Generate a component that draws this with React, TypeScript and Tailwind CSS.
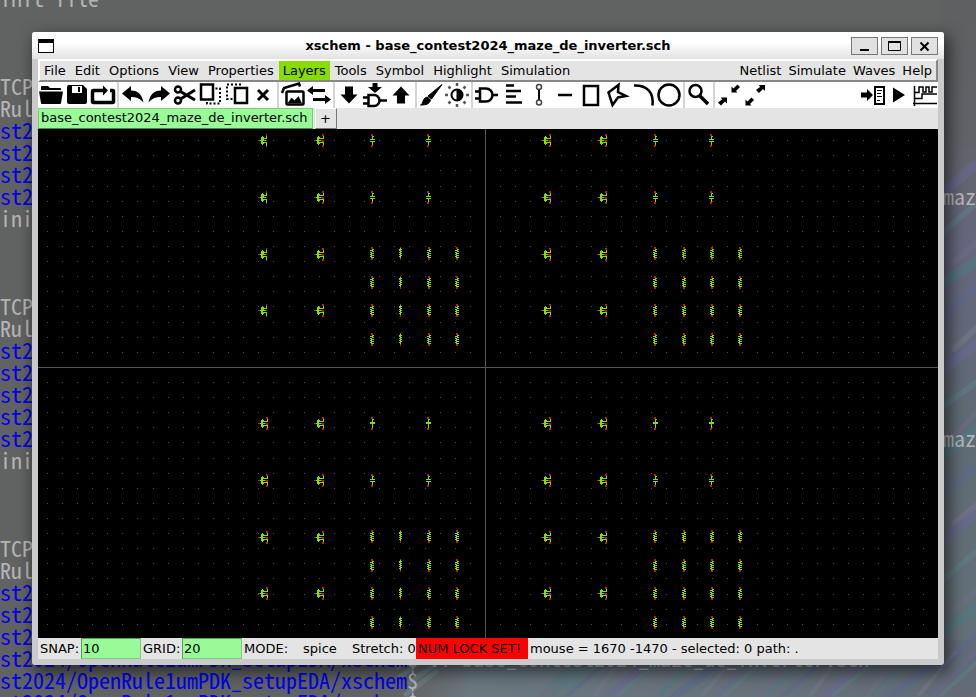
import type { ReactNode } from "react";

const PROMPT = "st2024/OpenRule1umPDK_setupEDA/xschem";

type TermLine = { text: string; blue?: boolean; tail?: string };

const st: TermLine = { text: "st2", blue: true };
const blank: TermLine = { text: "" };
const terminal: TermLine[] = [
  { text: "init file" },
  blank, blank, blank,
  { text: "TCP" },
  { text: "Rul" },
  st, st, st,
  { text: "st2", blue: true, tail: "maz" },
  { text: "ini" },
  blank, blank, blank,
  { text: "TCP" },
  { text: "Rul" },
  st, st, st, st,
  { text: "st2", blue: true, tail: "maz" },
  { text: "ini" },
  blank, blank, blank,
  { text: "TCP" },
  { text: "Rul" },
  st, st, st,
];

function Wallpaper() {
  const right = Array.from({ length: 17 }, (_, i) => i);
  const foot = Array.from({ length: 26 }, (_, i) => i);
  const colors = ["#6a6a92", "#5f7f8a", "#6d6f86", "#4f7c84", "#5b6a8e", "#77788c"];
  return (
    <svg className="absolute inset-0 h-full w-full" aria-hidden="true">
      <defs>
        <linearGradient id="side" x1="0" y1="0" x2="0" y2="1">
          <stop offset="0" stopColor="#5f6061" />
          <stop offset="0.2" stopColor="#626369" />
          <stop offset="0.35" stopColor="#66677f" />
          <stop offset="0.6" stopColor="#5f6b75" />
          <stop offset="1" stopColor="#66727a" />
        </linearGradient>
        <linearGradient id="foot" x1="0" y1="0" x2="1" y2="0">
          <stop offset="0" stopColor="#67696a" stopOpacity="0" />
          <stop offset="0.15" stopColor="#6b7880" />
          <stop offset="1" stopColor="#636c76" />
        </linearGradient>
      </defs>
      <rect width="100%" height="100%" fill="#616262" />
      <rect x="940" width="100%" height="100%" fill="url(#side)" />
      <rect x="380" y="640" width="600" height="60" fill="url(#foot)" />
      {right.map((i) => (
        <path
          key={i}
          d={`M${930 + (i % 3) * 12} ${204 + i * 29}l${44 + (i % 4) * 5} -${38 + (i % 3) * 4}`}
          stroke={colors[i % 6]}
          strokeWidth={i % 3 === 0 ? 10 : 6}
          strokeLinecap="round"
          opacity="0.6"
        />
      ))}
      {foot.map((i) => (
        <path
          key={i}
          d={`M${540 + i * 18 - (i % 3) * 7} ${700 - (i % 2) * 4}l${38 + (i % 3) * 9} -${42 + (i % 4) * 3}`}
          stroke={colors[(i + 2) % 6]}
          strokeWidth={i % 4 === 0 ? 8 : 4}
          opacity="0.6"
        />
      ))}
      <path d="M548 688l40 -34M566 690l28 -26" stroke="#527f7c" strokeWidth="5" opacity="0.6" />
      <path d="M396 668l14 -8M398 678l26 -18M408 684l28 -20M404 696l34 -26" stroke="#6c8a90" strokeWidth="5" opacity="0.6" />
    </svg>
  );
}

function Terminal() {
  return (
    <div className="absolute inset-x-0 -top-3.5 font-['Noto_Sans_Mono_CJK_JP','Liberation_Mono',monospace] text-[22px] leading-[22px] whitespace-pre text-[#b4b4b4]">
      {terminal.map((l, i) => (
        <div key={i} className="flex h-[22px] justify-between">
          <span className={l.blue ? "text-[#0000ee]" : ""}>{l.text}</span>
          {l.tail && <span>{l.tail}</span>}
        </div>
      ))}
      <div className="h-[22px]">
        <span className="text-[#0000ee]">{PROMPT}</span>$ vi base_contest2024_maze_de_inverter.sch
      </div>
      <div className="h-[22px]">
        <span className="text-[#0000ee]">{PROMPT}</span>$
      </div>
      <div className="h-[22px]">
        <span className="text-[#0000ee]">{PROMPT}</span>$
      </div>
    </div>
  );
}

const icons: Record<string, ReactNode> = {
  Open: <><path d="M3 8V5q0-1 1-1h6l2 2h10q1 0 1 1v1z" stroke="none" /><path d="M1 9.5h24l-2 11.5q0 1-1 1H4q-1 0-1-1z" stroke="none" /></>,
  Save: <path d="M5 3h14l4 4v13q0 2-2 2H5q-2 0-2-2V5q0-2 2-2zM8 4v7h10V4zM14 5h2v5h-2z" fillRule="evenodd" stroke="none" />,
  Reload: <><path d="M8 8.5H3.5q-1 0-1 1v10q0 1 1 1h19q1 0 1-1v-10q0-1-1-1H20M7 8.5h7" fill="none" strokeWidth="3.5" /><path d="M13 3.5l5 5-5 5z" stroke="none" /></>,
  Undo: <path d="M2 11.5l9-7.500v4.500c7 0 11 4 12.500 12-4-4.500-8-5.500-12.500-5.500v4z" stroke="none" />,
  Redo: <path d="M24 11.5l-9-7.500v4.500c-7 0-11 4-12.500 12 4-4.500 8-5.500 12.500-5.500v4z" stroke="none" />,
  Cut: <g fill="none" strokeWidth="2.5"><circle cx="6" cy="7.5" r="3" /><circle cx="6" cy="18.5" r="3" /><path d="M8.5 9.5L23 18M8.5 17L23 8" strokeWidth="3" /></g>,
  Copy: <g fill="none" strokeWidth="2.5"><rect x="3" y="2.5" width="12" height="15" /><path d="M17.5 6.5H22v15H9v-3" strokeDasharray="2 2" strokeWidth="2" /></g>,
  Paste: <g fill="none" strokeWidth="2.5"><rect x="11" y="6" width="12" height="15" /><path d="M17 2.5H3V17h6" strokeDasharray="2 2" strokeWidth="2" /></g>,
  Delete: <path d="M8 8l10 10M18 8L8 18" strokeWidth="3" />,
  Images: <><path d="M2 11l2-5 15-4.500 1 3" fill="none" strokeWidth="2.5" /><rect x="6.5" y="9.5" width="17" height="13" rx="1" fill="none" strokeWidth="2.5" /><path d="M8 21l3.500-5 3 2.500 4-4 3 6.500z" strokeWidth="0.5" /></>,
  Swap: <path d="M1 8.5L7 4v3h12v3H7v3zM25 17.5L19 13v3H7v3h12v3z" stroke="none" />,
  Descend: <path d="M9 4.5h8v8h4.500L13 21.500 4.500 12.500H9z" stroke="none" />,
  "Descend symbol": <><path d="M10.5 1h5v4H20l-7 6-7-6h4.500z" stroke="none" /><path d="M1 15.5h6M1 21.5h6M6.500 13H12a5.500 5.500 0 0 1 0 11H6.500zM18 18.500h7" fill="none" strokeWidth="2.5" /></>,
  Ascend: <path d="M9 21.5h8v-8h4.500L13 4.500 4.500 13.500H9z" stroke="none" />,
  Brush: <path d="M24 2.5L13.500 17l-3.500-3zM9.500 15l3 3c-1 4-4 5-10 5 2-1 2-2 3-5q1.500-3 4-3z" strokeWidth="1" />,
  Contrast: <><circle cx="13" cy="13" r="5.5" fill="none" strokeWidth="2" /><path d="M13 7.5a5.500 5.500 0 0 1 0 11z" /><path d="M13 1v3M13 22v3M1 13h3M22 13h3M4.500 4.500l2 2M19.500 19.500l2 2M4.500 21.500l2-2M19.500 6.500l2-2" stroke="#555" strokeWidth="2.5" /></>,
  Gate: <path d="M1 9.5h5M1 16.5h5M6 6.5h6a6.500 6.500 0 0 1 0 13H6zM18.500 13H24" fill="none" strokeWidth="2.5" />,
  Text: <path d="M6 3.500h8M6 9h15M6 14.500h10M6 20.500h16" strokeWidth="2.5" />,
  Wire: <><circle cx="13" cy="5" r="2.5" fill="none" stroke="#444" strokeWidth="1.5" /><path d="M13 8v10" strokeWidth="2" /><circle cx="13" cy="20.500" r="2.5" fill="none" stroke="#444" strokeWidth="1.5" /></>,
  Line: <path d="M6 13h14" strokeWidth="2.5" />,
  Rectangle: <rect x="6" y="4" width="14" height="19" fill="none" strokeWidth="2.5" />,
  Polygon: <path d="M14.5 3l-.5 7 8 4-8 1.500L8.500 23 4.500 10.500z" fill="none" strokeWidth="2.5" />,
  Arc: <path d="M4 3.5c13-.5 20 7 18.500 20" fill="none" strokeWidth="2.5" />,
  Circle: <circle cx="13" cy="13" r="10.5" fill="none" strokeWidth="2.5" />,
  Zoom: <><circle cx="9.5" cy="9" r="6" fill="none" strokeWidth="2.5" /><path d="M14 14l8 8" strokeWidth="3.5" /></>,
  "Zoom in": <><path d="M5 15.5h6v6l-2-2-4 4-3-3 4-3z" stroke="none" /><path d="M21.5 10.5h-6v-6l2 2 4-4 2.500 2.500-4 4z" stroke="none" /></>,
  "Zoom out": <><path d="M17 3h6v6l-2-2-4 4-3-3 4-3z" stroke="none" /><path d="M9.5 23.5h-6v-6l2 2 4-4 2.500 2.500-4 4z" stroke="none" /></>,
  Netlist: <><path d="M1 10.5h6V7l6 6-6 6v-3.500H1z" stroke="none" /><path d="M15 5h9v17h-9z" fill="none" strokeWidth="2" /><path d="M17 8.500h5M17 11.500h4M17 14.500h5M17 18.500h3" strokeWidth="1" /></>,
  Simulate: <path d="M7 5.5l12 7.500-12 7.500z" stroke="none" />,
  Waves: <path d="M2.500 4v20M1 21.500h24M2 10.500h5V5h4v5h3V5h3v5h3V5h5M2 16.500h8V12h15" fill="none" strokeWidth="1.5" />,
};

const groups = [
  ["Open", "Save", "Reload"],
  ["Undo", "Redo", "Cut", "Copy", "Paste", "Delete"],
  ["Images", "Swap"],
  ["Descend", "Descend symbol", "Ascend"],
  ["Brush", "Contrast"],
  ["Gate", "Text", "Wire", "Line", "Rectangle", "Polygon", "Arc", "Circle"],
  ["Zoom"],
  ["Zoom in", "Zoom out"],
];

function Tool({ name }: { name: string }) {
  return (
    <button type="button" aria-label={name} className="h-[26px] w-[26px]">
      <svg viewBox="0 0 26 26" className="block h-[26px] w-[26px]" fill="#000" stroke="#000">
        {icons[name]}
      </svg>
    </button>
  );
}

// Symbols as pixel maps: g = body, r = pin.
const MOS_A = ["........r", "........r", "....g...g", "...ggg..g", "...gggggg", "...ggg...", "rrggggggr", "...gg....", "...gggggg", "...ggg..g", "....g...g", "........g", "........r"];
const MOS_B = ["........rr", "........rr", "....g....g", "...ggg...g", "...ggggggg", "...gg.....", "rrgggggrrr", "...gg...rr", "...ggggggg", "...ggg...g", "....g....g", "........rr", "........rr"];
const CAP = [".rr..", ".rr..", "..gg.", "..g..", "..g..", "ggggg", ".....", "ggggg", "..g..", "..g..", "..g..", ".rr..", ".rr.."];
const CAP_B = [".rr..", ".rr..", "..gg.", "..g..", "..g..", "ggggg", "ggggg", "..g..", "..g..", "..g..", "..g..", ".rr..", ".rr.."];
const RES = [".rr.", ".rr.", "..gg", "ggg.", "..gg", "gg..", ".ggg", "gg..", ".ggg", "gg..", ".ggg", ".rr.", ".rr."];
const RES_N = [".r.", ".g.", "ggg", "gg.", ".gg", "gg.", ".gg", "gg.", ".gg", "gg.", ".g.", ".r.", ".r."];

function Sprite({ map, x, y }: { map: string[]; x: number; y: number }) {
  let g = "";
  let r = "";
  map.forEach((row, j) => {
    [...row].forEach((c, i) => {
      if (c === "g") g += `M${x + i} ${y + j}h1v1h-1z`;
      if (c === "r") r += `M${x + i} ${y + j}h1v1h-1z`;
    });
  });
  return (
    <>
      <path d={g} fill="#88dd00" />
      <path d={r} fill="#bb2200" />
    </>
  );
}

const STEP = 15.11;
const OX = 447.52;
const OY = 238.35;

function Schematic() {
  let dots = "";
  for (let i = -29; i <= 29; i++)
    for (let j = -15; j <= 17; j++) dots += `M${Math.floor(OX + i * STEP)} ${Math.floor(OY + j * STEP)}h1v1h-1z`;
  return (
    <svg className="block h-full w-full" shapeRendering="crispEdges" role="img" aria-label="Schematic">
      <path d={dots} fill="#4d4d4d" />
      <path d="M0 238h2000v1H0zM447 0h1v2000h-1z" fill="#555" />
      {[0, 283].map((dx) =>
        [0, 283].map((dy) => (
          <g key={`${dx}-${dy}`}>
            {[5, 62, 119, 175].map((y) => (
              <g key={y}>
                <Sprite map={dx || dy ? MOS_B : MOS_A} x={220 + dx} y={y + dy} />
                <Sprite map={MOS_B} x={276 + dx} y={y + dy} />
              </g>
            ))}
            {[5, 62].map((y) => (
              <g key={y}>
                <Sprite map={dy && y === 5 ? CAP_B : CAP} x={332 + dx} y={y + dy} />
                <Sprite map={dy && y === 5 ? CAP_B : CAP} x={388 + dx} y={y + dy} />
              </g>
            ))}
            {[118, 147, 175, 204].map((y) =>
              [332, 361, 389, 417].map((x, k) => (
                <Sprite key={`${x}-${y}`} map={k === 1 && !dx ? RES_N : RES} x={x + dx} y={y + dy} />
              )),
            )}
          </g>
        )),
      )}
    </svg>
  );
}

const leftMenu = ["File", "Edit", "Options", "View", "Properties", "Layers", "Tools", "Symbol", "Highlight", "Simulation"];
const rightMenu = ["Netlist", "Simulate", "Waves", "Help"];

function MenuItem({ name, tight }: { name: string; tight?: boolean }) {
  return (
    <button type="button" className={`pb-0.5 ${tight ? "px-[3px]" : "px-1"} ${name === "Layers" ? "bg-[#88dd00]" : ""}`}>
      {name}
    </button>
  );
}

function TitleButton({ label, children }: { label: string; children: ReactNode }) {
  return (
    <button type="button" aria-label={label} className="h-[18px] w-[27px] border border-[#777] bg-[#e1e1e1]">
      <svg viewBox="0 0 25 16" className="block h-4 w-[25px]" fill="none" stroke="#000">
        {children}
      </svg>
    </button>
  );
}

export default function App() {
  return (
    <div className="relative h-screen overflow-hidden p-8 font-['DejaVu_Sans',sans-serif] text-[13px] text-black">
      <Wallpaper />
      <Terminal />
      <main className="relative flex h-full flex-col rounded-[3px] bg-[#cacaca] px-1.5 pb-1.5 shadow-[4px_6px_16px_2px_rgba(0,0,0,0.55)]">
        <header className="-mx-1.5 flex h-[27px] shrink-0 items-center rounded-t-[3px] bg-linear-to-b from-white from-40% to-[#e2e2e2] px-1.5">
          <div className="flex flex-1">
            <span className="h-3.5 w-4 border border-t-4 border-black bg-white" />
          </div>
          <h1 className="font-bold">xschem - base_contest2024_maze_de_inverter.sch</h1>
          <div className="flex flex-1 justify-end gap-[3px]">
            <TitleButton label="Minimize"><path d="M8 12h9" strokeWidth="2" /></TitleButton>
            <TitleButton label="Maximize"><path d="M6.5 4v8.500h12V4" /><path d="M6 4h13" strokeWidth="2" /></TitleButton>
            <TitleButton label="Close"><path d="M8.5 4.500l8 8M16.500 4.500l-8 8" strokeWidth="2" /></TitleButton>
          </div>
        </header>
        <nav className="flex h-[23px] shrink-0 justify-between border-2 border-t-white border-r-[#888] border-b-[#888] border-l-white bg-[#e4e4e4]">
          <div className="flex gap-px">{leftMenu.map((m) => <MenuItem key={m} name={m} />)}</div>
          <div className="flex gap-px pr-px">{rightMenu.map((m) => <MenuItem key={m} name={m} tight />)}</div>
        </nav>
        <div className="flex h-[26px] shrink-0 bg-white">
          {groups.map((g, i) => (
            <div key={g[0]} className="flex">
              {i > 0 && <span className="mx-px w-0.5 bg-[#d4d4d4]" />}
              {g.map((n) => <Tool key={n} name={n} />)}
            </div>
          ))}
          <div className="ml-auto flex">
            {["Netlist", "Simulate", "Waves"].map((n) => <Tool key={n} name={n} />)}
          </div>
        </div>
        <div className="flex h-[21px] shrink-0 bg-[#e4e4e4]">
          <button type="button" className="border border-[#7ccc7c] border-b-[#4a8a4a] bg-[#98fb98] pr-1 pb-0.5 pl-0.5 leading-4">
            base_contest2024_maze_de_inverter.sch
          </button>
          <button type="button" className="ml-0.5 w-[22px] border border-t-white border-r-[#777] border-b-[#777] border-l-white leading-5">
            +
          </button>
        </div>
        <div className="min-h-0 flex-1 overflow-hidden bg-black">
          <Schematic />
        </div>
        <footer className="flex h-[21px] shrink-0 items-center bg-[#e4e4e4] pl-0.5 whitespace-pre">
          <label htmlFor="snap" className="w-[41px]">SNAP:</label>
          <input id="snap" defaultValue="10" className="h-[21px] w-[60px] border border-[#7ccc7c] border-t-[#5a9a5a] border-l-[#5a9a5a] bg-[#98fb98] px-px outline-none" />
          <label htmlFor="grid" className="w-[41px] pl-0.5">GRID:</label>
          <input id="grid" defaultValue="20" className="h-[21px] w-[60px] border border-[#7ccc7c] border-t-[#5a9a5a] border-l-[#5a9a5a] bg-[#98fb98] px-px outline-none" />
          <span className="w-[61px] pl-0.5">MODE:</span>
          <span className="w-[49px]">spice</span>
          <span className="w-16">Stretch: 0</span>
          <span className="w-28 bg-[#ff0000] pl-0.5 leading-[21px]">NUM LOCK SET!</span>
          <span className="pl-0.5">mouse = 1670 -1470 - selected: 0 path: .</span>
        </footer>
      </main>
    </div>
  );
}
